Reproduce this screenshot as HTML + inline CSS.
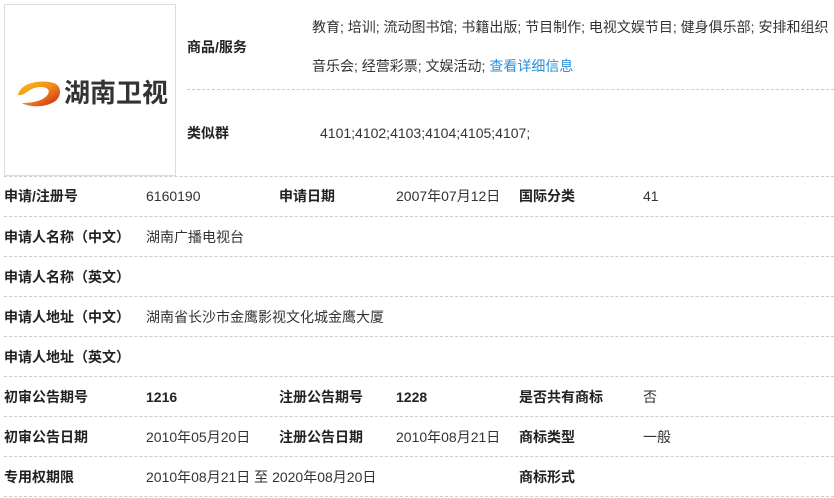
<!DOCTYPE html>
<html><head><meta charset="utf-8"><style>
*{margin:0;padding:0;box-sizing:border-box}
body{width:834px;height:498px;background:#fff;font-family:"Liberation Sans","Noto Sans CJK SC",sans-serif;font-size:14px;color:#333;position:relative;overflow:hidden}
.a{position:absolute;white-space:nowrap;line-height:16px}
.b{font-weight:bold;color:#222}
.line{position:absolute;left:4px;right:0;border-top:1px dashed #ccc;height:0}
</style></head><body>
<div style="position:absolute;left:4px;top:4px;width:172px;height:172px;border:1px solid #ddd"></div>
<svg style="position:absolute;left:14px;top:76px" width="50" height="34" viewBox="0 0 50 32">
<defs><linearGradient id="g" x1="0" y1="0" x2="1" y2="1"><stop offset="0" stop-color="#f7c21e"/><stop offset="0.5" stop-color="#f08a1c"/><stop offset="1" stop-color="#c8201c"/></linearGradient></defs>
<path d="M4 18 C6 6 26 2 40 6 C48 9 48 20 40 25 C30 31 14 30 8 26 C18 26 30 24 34 17 C38 10 26 8 18 12 C12 15 9 19 4 18 Z" fill="url(#g)"/>
</svg>
<div class="a" style="left:64px;top:79px;font-size:26px;line-height:28px;font-weight:bold;color:#333">湖南卫视</div>

<div class="a b" style="left:187px;top:39px">商品/服务</div>
<div class="a" style="left:312px;top:19px">教育; 培训; 流动图书馆; 书籍出版; 节目制作; 电视文娱节目; 健身俱乐部; 安排和组织</div>
<div class="a" style="left:312px;top:58px">音乐会; 经营彩票; 文娱活动; <span style="color:#2a8fd6">查看详细信息</span></div>
<div class="line" style="left:187px;top:89px"></div>
<div class="a b" style="left:187px;top:125px">类似群</div>
<div class="a" style="left:320px;top:125px">4101;4102;4103;4104;4105;4107;</div>

<div class="line" style="top:176px"></div>
<div class="a b" style="left:4px;top:188px">申请/注册号</div>
<div class="a" style="left:146px;top:188px">6160190</div>
<div class="a b" style="left:279px;top:188px">申请日期</div>
<div class="a" style="left:396px;top:188px">2007年07月12日</div>
<div class="a b" style="left:519px;top:188px">国际分类</div>
<div class="a" style="left:643px;top:188px">41</div>

<div class="line" style="top:216px"></div>
<div class="a b" style="left:4px;top:229px">申请人名称（中文）</div>
<div class="a" style="left:146px;top:229px">湖南广播电视台</div>

<div class="line" style="top:256px"></div>
<div class="a b" style="left:4px;top:269px">申请人名称（英文）</div>

<div class="line" style="top:296px"></div>
<div class="a b" style="left:4px;top:309px">申请人地址（中文）</div>
<div class="a" style="left:146px;top:309px">湖南省长沙市金鹰影视文化城金鹰大厦</div>

<div class="line" style="top:336px"></div>
<div class="a b" style="left:4px;top:349px">申请人地址（英文）</div>

<div class="line" style="top:376px"></div>
<div class="a b" style="left:4px;top:389px">初审公告期号</div>
<div class="a b" style="left:146px;top:389px">1216</div>
<div class="a b" style="left:279px;top:389px">注册公告期号</div>
<div class="a b" style="left:396px;top:389px">1228</div>
<div class="a b" style="left:519px;top:389px">是否共有商标</div>
<div class="a" style="left:643px;top:389px">否</div>

<div class="line" style="top:416px"></div>
<div class="a b" style="left:4px;top:429px">初审公告日期</div>
<div class="a" style="left:146px;top:429px">2010年05月20日</div>
<div class="a b" style="left:279px;top:429px">注册公告日期</div>
<div class="a" style="left:396px;top:429px">2010年08月21日</div>
<div class="a b" style="left:519px;top:429px">商标类型</div>
<div class="a" style="left:643px;top:429px">一般</div>

<div class="line" style="top:456px"></div>
<div class="a b" style="left:4px;top:469px">专用权期限</div>
<div class="a" style="left:146px;top:469px">2010年08月21日 至 2020年08月20日</div>
<div class="a b" style="left:519px;top:469px">商标形式</div>
<div class="line" style="top:496px"></div>
</body></html>
